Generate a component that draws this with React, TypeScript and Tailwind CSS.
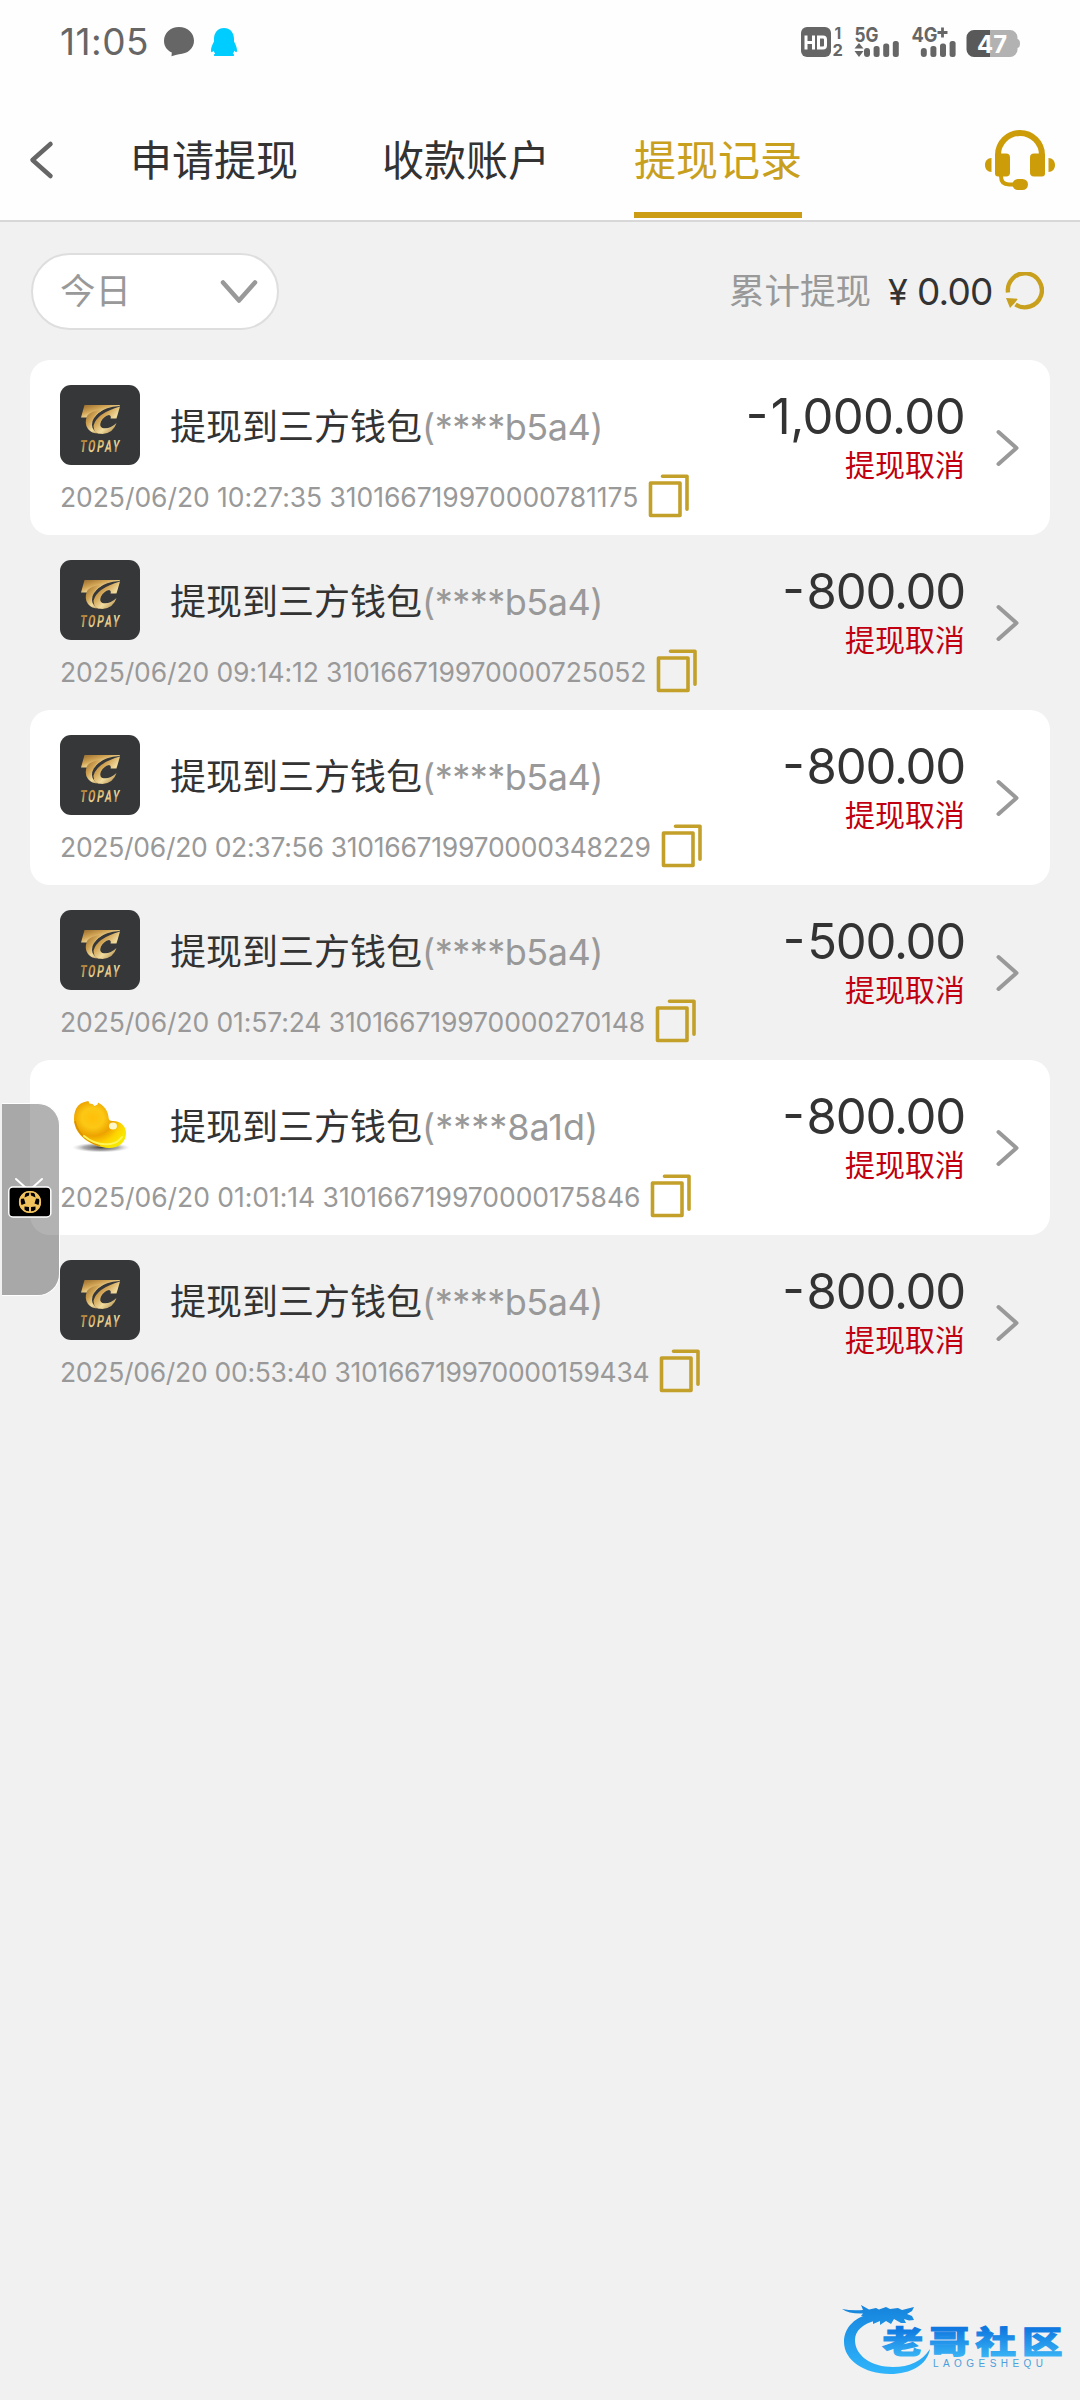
import { useId } from "react";

type Wallet = "topay" | "bean";

type WithdrawRecord = {
  wallet: Wallet;
  account: string;
  time: string;
  orderNo: string;
  amount: string;
  // digit widths differ per line, so each line carries its own tracking
  tracking: string;
};

const RECORDS: WithdrawRecord[] = [
  { wallet: "topay", account: "b5a4", time: "2025/06/20 10:27:35", orderNo: "310166719970000781175", amount: "1,000.00", tracking: "tracking-[-0.06px]" },
  { wallet: "topay", account: "b5a4", time: "2025/06/20 09:14:12", orderNo: "310166719970000725052", amount: "800.00", tracking: "tracking-[-0.12px]" },
  { wallet: "topay", account: "b5a4", time: "2025/06/20 02:37:56", orderNo: "310166719970000348229", amount: "800.00", tracking: "tracking-[-0.28px]" },
  { wallet: "topay", account: "b5a4", time: "2025/06/20 01:57:24", orderNo: "310166719970000270148", amount: "500.00", tracking: "tracking-[-0.12px]" },
  { wallet: "bean", account: "8a1d", time: "2025/06/20 01:01:14", orderNo: "310166719970000175846", amount: "800.00", tracking: "tracking-[-0.04px]" },
  { wallet: "topay", account: "b5a4", time: "2025/06/20 00:53:40", orderNo: "310166719970000159434", amount: "800.00", tracking: "tracking-[-0.29px]" },
];

const TABS = [
  { label: "申请提现", active: false },
  { label: "收款账户", active: false },
  { label: "提现记录", active: true },
];

function SignalBars({ x }: { x: number }) {
  return (
    <g fill="#666">
      <rect x={x} y="48" width="6" height="9" rx="3" />
      <rect x={x + 9.6} y="46" width="6" height="11" rx="2.5" />
      <rect x={x + 19.2} y="43.5" width="6" height="13.5" rx="2.5" />
      <rect x={x + 28.8} y="41" width="6" height="16" rx="2.5" />
    </g>
  );
}

function StatusBar() {
  return (
    <div className="flex h-[84px] justify-between pl-[59px]">
      <div className="flex h-[84px] items-center">
        <span className="w-[103px] pl-[1px] text-[37px] leading-[84px] tracking-[0.5px] text-[#666]">11:05</span>
        <svg width="80" height="36" viewBox="162 24 80 36">
          <path
            d="M179 27c8.500 0 15 6 15 13.800S187.500 54 179 54.200q-3 .5-7.500 2l.3-3.600C167 50.500 164 46 164 41 164 33 170.500 27 179 27z"
            fill="#666"
          />
          <path
            d="M224 28c6 0 10 4.500 10 11v2.500c1.600 3 3 6 3 9 0 2-1 2.300-2.600.3-.3 1-.8 2-1.600 2.800 1.200.6 1.400 1.200 1 2.400h-19.600c-.4-1.200-.2-1.800 1-2.400-.8-.8-1.300-1.800-1.600-2.800-1.600 2-2.600 1.700-2.600-.3 0-3 1.400-6 3-9V39c0-6.500 4-11 10-11z"
            fill="#00cdff"
          />
        </svg>
      </div>
      <svg width="290" height="84" viewBox="790 0 290 84" fontFamily="Inter, sans-serif">
        <rect x="801" y="27" width="30" height="30" rx="6" fill="#666" />
        <path
          d="M806 35.500v14M813.500 35.500v14M806 42.500h7.500M818.500 37v11h4.500q2.500 0 2.500-2.500v-6q0-2.500-2.500-2.500z"
          fill="none"
          stroke="#fff"
          strokeWidth="3"
        />
        <text x="834.500" y="39" fontSize="15.500" fontWeight="700" fill="#666">1</text>
        <text x="832.500" y="56" fontSize="16.500" fontWeight="700" fill="#666">2</text>
        <text x="854.500" y="41.500" fontSize="20" fontWeight="700" fill="#666" textLength="24" lengthAdjust="spacingAndGlyphs">5G</text>
        <path d="M854.500 48.500l4.500-5.500 4.500 5.500zM854.500 51h9l-4.500 6z" fill="#666" />
        <SignalBars x={864} />
        <text x="911.500" y="41.500" fontSize="20" fontWeight="700" fill="#666" textLength="26" lengthAdjust="spacingAndGlyphs">4G</text>
        <path d="M937.500 32.500h10M942.500 27.500v10" stroke="#666" strokeWidth="2.800" />
        <SignalBars x={920.800} />
        <path d="M974 30h16v27h-16a7.500 7.500 0 0 1-7.500-7.500v-12a7.500 7.500 0 0 1 7.500-7.500z" fill="#595959" />
        <path d="M990 30h20a7.500 7.500 0 0 1 7.500 7.500v1.500q2.500.5 2.500 4.500t-2.500 4.500v1.500a7.500 7.500 0 0 1-7.500 7.500h-20z" fill="#b2b2b2" />
        <text x="977" y="52.500" fontSize="24" fontWeight="700" fill="#fff" textLength="30" lengthAdjust="spacingAndGlyphs">47</text>
      </svg>
    </div>
  );
}

function HeadsetIcon() {
  return (
    <svg width="72" height="62" viewBox="984 129 72 62" fill="#cc9d08">
      <path d="M998 156v-1a22 22 0 0 1 44 0v1" fill="none" stroke="#cc9d08" strokeWidth="6" />
      <path d="M995 155q0-1.500 2-1.500h9q4 0 4 4v15q0 4-4 4h-8q-3 0-3-3z" />
      <path d="M1045 155q0-1.500-2-1.500h-9q-4 0-4 4v15q0 4 4 4h8q3 0 3-3z" />
      <path d="M991.500 158v14c-4 0-6.500-3-6.500-7s2.500-7 6.500-7zM1048.500 158v14c4 0 6.500-3 6.500-7s-2.500-7-6.500-7z" />
      <path d="M1001 176q0 8.500 8 8.500h8" fill="none" stroke="#cc9d08" strokeWidth="4" />
      <rect x="1012.500" y="179" width="15.500" height="11" rx="5.500" />
    </svg>
  );
}

function Header() {
  return (
    <header className="h-[222px] border-b-2 border-[#d8d8d8] bg-[#fefefe]">
      <StatusBar />
      <div className="flex h-[136px] items-start pt-[17px]">
        <svg className="mt-[39px] ml-[28px]" width="27" height="40" viewBox="0 0 27 40">
          <path d="M22.500 4L4.500 20l18 16" fill="none" stroke="#666" strokeWidth="4.500" strokeLinecap="round" strokeLinejoin="round" />
        </svg>
        <nav className="ml-[75px] flex gap-[84px]">
          {TABS.map((tab) => (
            <span
              key={tab.label}
              className={`h-[117px] w-[168px] text-[42px] leading-[119px] whitespace-nowrap ${
                tab.active ? "border-b-[6px] border-[#cc9d12] text-[#c8a01e]" : "text-[#333]"
              }`}
            >
              {tab.label}
            </span>
          ))}
        </nav>
        <div className="mt-[28px] ml-[182px]">
          <HeadsetIcon />
        </div>
      </div>
    </header>
  );
}

function FilterBar() {
  return (
    <div className="flex h-[138px] items-start justify-between pt-[31px] pr-[36px] pl-[31px]">
      <button className="flex h-[77px] w-[248px] items-center justify-between rounded-full border-2 border-[#dedede] bg-white pt-[1px] pr-[17px] pl-[27px] text-[35.500px] text-[#999]">
        今日
        <svg width="42" height="28" viewBox="0 0 42 28">
          <path d="M5 4.500L21 22.500 37 4.500" fill="none" stroke="#999" strokeWidth="4.500" strokeLinecap="round" strokeLinejoin="round" />
        </svg>
      </button>
      <div className="flex h-[77px] items-center pt-[1px] text-[35.500px] text-[#999]">
        <span>累计提现</span>
        <span className="ml-[17px] w-[26px] text-[36px] text-[#333]">¥</span>
        <span className="ml-[3px] w-[76px] text-[37px] tracking-[-0.8px] text-[#333]">0.00</span>
        <svg className="ml-[11px]" width="40" height="40" viewBox="0 0 40 40">
          <path d="M4 20.500A17 17 0 1 1 11.500 32.500" fill="none" stroke="#c8a01e" strokeWidth="4.400" />
          <path d="M2 26l12 .8-3.500 4.500-4.500 4.700z" fill="#c8a01e" />
        </svg>
      </div>
    </div>
  );
}

function TopayLogo() {
  const gold = useId();
  return (
    <svg className="size-[80px] rounded-[11px] bg-[#353738]" viewBox="0 0 80 80">
      <defs>
        <linearGradient id={gold} x1="0" y1="0" x2="1" y2="1">
          <stop offset="0" stopColor="#93682b" />
          <stop offset=".35" stopColor="#d0a252" />
          <stop offset=".6" stopColor="#f1dca0" />
          <stop offset="1" stopColor="#946621" />
        </linearGradient>
      </defs>
      <path d="M24.500 20h35.500l-.5 1q-14 1-21 7-3 2.500-4 4.500h-13.500z" fill={`url(#${gold})`} />
      <path d="M27 31q-3 8 1 13t12 4.500q-8-2.500-8-8.500 0-9 12-16-14 2-17 7z" fill={`url(#${gold})`} />
      <path
        d="M60 21.500l-3.500 12H50.500q1-3-1.500-3.500-5 1-8 6.500-2 5 1.500 6.500 7 1.500 14-5-3 10-14 11-9.500 0-9-8.500Q37 28 60 21.500z"
        fill={`url(#${gold})`}
      />
      <text
        x="0"
        y="0"
        fontSize="17"
        fontWeight="700"
        fontFamily="Roboto, 'Liberation Sans', sans-serif"
        letterSpacing="3"
        fill={`url(#${gold})`}
        transform="translate(19.500 66.500) skewX(-7) scale(.61 1)"
      >
        TOPAY
      </text>
    </svg>
  );
}

function BeanLogo() {
  const body = useId();
  const shade = useId();
  return (
    <svg className="size-[80px]" viewBox="0 0 80 80">
      <defs>
        <radialGradient id={body} cx=".36" cy=".36" r=".7">
          <stop offset="0" stopColor="#ffbf0a" />
          <stop offset=".3" stopColor="#fcc814" />
          <stop offset=".55" stopColor="#eda200" />
          <stop offset=".8" stopColor="#ffd400" />
          <stop offset="1" stopColor="#f7e800" />
        </radialGradient>
        <radialGradient id={shade}>
          <stop offset="0" stopColor="#444" />
          <stop offset=".6" stopColor="#888" stopOpacity=".7" />
          <stop offset="1" stopColor="#ccc" stopOpacity="0" />
        </radialGradient>
      </defs>
      <ellipse cx="41" cy="62.500" rx="29" ry="5" fill={`url(#${shade})`} />
      <path
        d="M14 34C14 22 20 16 31 16c10 .5 17 8 17.500 16 .3 3 1 4 5 4 7 0 12.500 5 12.500 12 0 9-7 15-17 15C31 62 14 50 14 34z"
        fill={`url(#${body})`}
      />
      <path d="M15 36q3 17 25 25" fill="none" stroke="#d99200" strokeWidth="1.500" />
      <path d="M28 15l1.500 3.500 3 .5 2 2 3-1.500 1.500-4.500z" fill="#fff" />
      <ellipse cx="53" cy="41" rx="4" ry="3.500" fill="#fff8c8" />
      <path d="M24 51q12 10 26 8 8-1 12-7" fill="none" stroke="#fff45a" strokeWidth="2" strokeLinecap="round" />
    </svg>
  );
}

function CopyIcon() {
  return (
    <svg width="42" height="44" viewBox="0 0 42 44" fill="none" stroke="#c3a02a" strokeWidth="3.600" strokeLinejoin="round" strokeLinecap="round">
      <rect x="2.500" y="9" width="29.500" height="32.500" />
      <path d="M14.500 2.300h24.500v33" />
    </svg>
  );
}

function RecordRow({ record, filled }: { record: WithdrawRecord; filled: boolean }) {
  return (
    <li className={`flex h-[175px] rounded-[20px] pl-[30px] ${filled ? "bg-white" : ""}`}>
      <div className="flex-1 pt-[25px]">
        <div className="flex h-[80px] items-center whitespace-nowrap">
          {record.wallet === "topay" ? <TopayLogo /> : <BeanLogo />}
          <span className="ml-[30px] pt-[4px] text-[36px] text-[#333]">提现到三方钱包</span>
          <span className={`pt-[4px] text-[36px] text-[#999] ${record.wallet === "bean" ? "tracking-[0px]" : "tracking-[-0.5px]"}`}>
            (****{record.account})
          </span>
        </div>
        <div className="mt-[9px] flex h-[44px] items-center whitespace-nowrap">
          <span className={`pt-[3px] text-[26.500px] text-[#999] ${record.tracking}`}>
            {record.time} {record.orderNo}
          </span>
          <span className="ml-[10px]">
            <CopyIcon />
          </span>
        </div>
      </div>
      <div className="flex flex-col items-end pt-[27px]">
        <div className={`flex text-[49px] leading-[60px] text-[#333] ${record.amount.length > 6 ? "tracking-[-0.600px]" : "tracking-[-1.200px]"}`}>
          <span className="mt-[-3px] mr-[3px]">-</span>
          <span className="mr-[-1px]">{record.amount}</span>
        </div>
        <span className="mt-[-2px] mr-[-1px] text-[30px] leading-[40px] text-[#c00010]">提现取消</span>
      </div>
      <svg className="mt-[68px] mr-[29px] ml-[30px]" width="27" height="40" viewBox="0 0 27 40">
        <path d="M4.500 4l18 16-18 16" fill="none" stroke="#999" strokeWidth="4" strokeLinecap="round" strokeLinejoin="round" />
      </svg>
    </li>
  );
}

function LiveHandle() {
  return (
    <div className="absolute top-[1103px] left-[2px] flex h-[193px] w-[58px] items-center justify-center rounded-r-[22px] border border-l-0 border-white bg-black/30">
      <svg className="-mt-[4px] -ml-[1px]" width="46" height="42" viewBox="0 0 46 42">
        <path d="M9 2l10 9M35 2L25 11" stroke="#fff" strokeWidth="2" strokeLinecap="round" />
        <rect x="1.800" y="10" width="42" height="30" rx="4" fill="#000" stroke="#fff" strokeWidth="1.500" />
        <circle cx="23" cy="25" r="11" fill="#f0c25e" />
        <path
          d="M18.500 15.500h4.500l-1 3-4.500 2zM27.500 15.500h-4.500l1 3 4.500 2zM13 22l4-.5 1.500 5-4 1.500zM33 22l-4-.5-1.500 5 4 1.500zM17.500 29.500l4.500.5v4.500l-4.500-1zM28.500 29.500l-4.500.5v4.500l4.500-1z"
          fill="#000"
        />
        <circle cx="23" cy="25" r="10.400" fill="none" stroke="#f0c25e" strokeWidth="1.400" />
        <path d="M23 15v4" stroke="#f0c25e" strokeWidth="1.200" />
      </svg>
    </div>
  );
}

function CommunityLogo() {
  return (
    <svg className="absolute top-[2295px] left-[835px]" width="240" height="90" viewBox="835 2295 240 90">
      <defs>
        <linearGradient id="community" x1="0" y1="2305" x2="0" y2="2372" gradientUnits="userSpaceOnUse">
          <stop offset="0" stopColor="#1583dc" />
          <stop offset="1" stopColor="#2fb4fb" />
        </linearGradient>
        <linearGradient id="communityText" x1="0" y1="0" x2="0" y2="1">
          <stop offset=".25" stopColor="#0f78e0" />
          <stop offset="1" stopColor="#3fbdf8" />
        </linearGradient>
      </defs>
      <path
        d="M872 2314c-16 2-28 13-28 28 0 18 20 32 46 32 21 0 37-9 40-25-8 12-20 18-37 18-21 0-38-11-38-27 0-9 7-16 22-20z"
        fill="url(#community)"
      />
      <path
        d="M842 2309Q852 2311 863 2310L861 2305L869 2309.500L876 2308L879 2309.500L886 2307L890 2309L898 2308L902 2310L914 2307L912 2311L907 2314L912 2316L914 2320L909 2320.500L904 2319L906 2323L901 2323L894 2319L891 2324L886 2321L880 2325V2321L873 2324V2320L866 2323V2317L861 2316L863 2313.500Q849 2314 842 2309z"
        fill="url(#community)"
      />
      <g transform="translate(882.500 2353) scale(1 .75)">
        <text
          x="0"
          y="0"
          fontSize="40.500"
          fontWeight="900"
          letterSpacing="6"
          fontFamily="'Noto Sans CJK SC', sans-serif"
          fill="url(#communityText)"
          stroke="url(#communityText)"
          strokeWidth="1.500"
        >
          老哥社区
        </text>
      </g>
      <text x="933" y="2367" fontSize="10" fontFamily="'Liberation Sans', sans-serif" textLength="110" fill="#4c9fdc">
        LAOGESHEQU
      </text>
    </svg>
  );
}

export default function App() {
  return (
    <div className="relative h-[2400px] w-[1080px] overflow-hidden bg-[#f1f1f1] font-[Inter,'Noto_Sans_CJK_SC',sans-serif]">
      <Header />
      <FilterBar />
      <ul className="px-[30px]">
        {RECORDS.map((record, i) => (
          <RecordRow key={record.orderNo} record={record} filled={i % 2 === 0} />
        ))}
      </ul>
      <LiveHandle />
      <CommunityLogo />
    </div>
  );
}
